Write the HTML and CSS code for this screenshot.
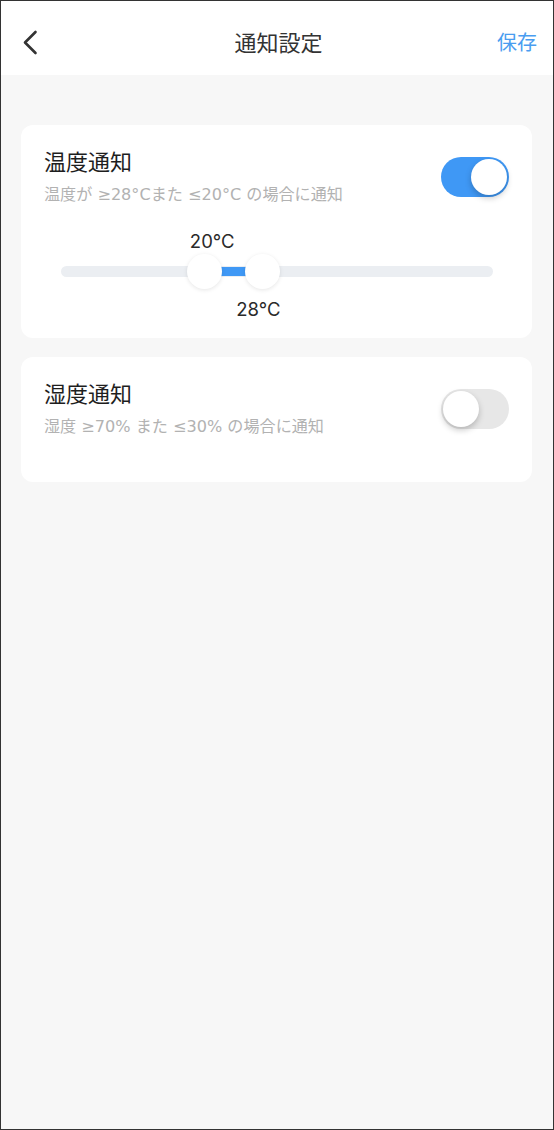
FILE: index.html
```html
<!DOCTYPE html>
<html lang="ja">
<head>
<meta charset="utf-8">
<title>通知設定</title>
<link rel="stylesheet" href="styles.css">
</head>
<body>
<div class="frame">
  <header class="topbar">
    <div class="back">
      <svg width="16" height="26" viewBox="0 0 16 26"><path d="M13.5 2 L3 12.5 L13.5 23" fill="none" stroke="#333" stroke-width="2.6" stroke-linecap="round" stroke-linejoin="round"/></svg>
    </div>
    <div class="title">通知設定</div>
    <div class="save">保存</div>
  </header>
  <main class="content">
    <section class="card card-temp">
      <div class="row">
        <div class="texts">
          <div class="name">温度通知</div>
          <div class="desc">温度が ≥28°Cまた ≤20°C の場合に通知</div>
        </div>
        <div class="switch on"><span class="thumb"></span></div>
      </div>
      <div class="slider">
        <div class="label-row"><span class="val" style="left:35%">20°C</span></div>
        <div class="track-area">
          <div class="track"></div>
          <div class="range" style="left:33.3%;width:13.4%"></div>
          <span class="knob" style="left:33.3%"></span>
          <span class="knob" style="left:46.7%"></span>
        </div>
        <div class="label-row low"><span class="val" style="left:45.7%">28°C</span></div>
      </div>
    </section>
    <section class="card card-hum">
      <div class="row">
        <div class="texts">
          <div class="name">湿度通知</div>
          <div class="desc">湿度 ≥70% また ≤30% の場合に通知</div>
        </div>
        <div class="switch"><span class="thumb"></span></div>
      </div>
    </section>
  </main>
</div>
</body>
</html>
```

FILE: styles.css
```css
* { box-sizing: border-box; }
html, body { margin: 0; padding: 0; }
body {
  font-family: "Inter", "Noto Sans CJK JP", sans-serif;
  color: #222;
}
.frame {
  width: 554px;
  height: 1130px;
  border: 1px solid #333;
  background: #f7f7f7;
  display: flex;
  flex-direction: column;
}
.topbar {
  height: 74px;
  background: #fff;
  display: grid;
  grid-template-columns: 1fr auto 1fr;
  align-items: center;
  padding: 10px 16px 0 19px;
}
.back { display: flex; align-items: center; height: 26px; padding-left: 2px; }
.title {
  font-size: 22px;
  color: #333;
  line-height: 30px;
}
.save {
  justify-self: end;
  font-size: 20px;
  color: #4a9df0;
  line-height: 28px;
}
.content {
  padding: 50px 21px 0 20px;
  display: flex;
  flex-direction: column;
  gap: 19px;
}
.card {
  background: #fff;
  border-radius: 12px;
  padding: 22px 23px 0 23px;
}
.card-temp { height: 213px; }
.card-hum { height: 125px; }
.row {
  display: flex;
  justify-content: space-between;
  align-items: flex-start;
}
.name {
  font-size: 22px;
  line-height: 30px;
  color: #1e1e1e;
}
.desc {
  font-family: "DejaVu Sans", "Noto Sans CJK JP", sans-serif;
  font-size: 16.1px;
  line-height: 22px;
  color: #b2b2b2;
  margin-top: 7px;
}
.switch {
  width: 68px;
  height: 40px;
  border-radius: 20px;
  background: #e7e7e7;
  margin-top: 10px;
  padding: 2px;
  display: flex;
  justify-content: flex-start;
}
.switch.on {
  background: #3f98f5;
  justify-content: flex-end;
}
.thumb {
  width: 36px;
  height: 36px;
  border-radius: 50%;
  background: #fff;
  box-shadow: 0 3px 6px rgba(0,0,0,0.22);
}
.slider {
  margin: 24px 16px 0 17px;
  display: flex;
  flex-direction: column;
}
.label-row {
  position: relative;
  height: 22px;
}
.label-row.low { margin-top: 9px; }
.val {
  position: absolute;
  top: 0;
  transform: translateX(-50%);
  font-size: 18.5px;
  line-height: 22px;
  color: #2a2a2a;
  white-space: nowrap;
}
.track-area {
  position: relative;
  height: 36px;
  margin-top: 1px;
}
.track {
  position: absolute;
  left: 0; right: 0;
  top: 13px;
  height: 11px;
  border-radius: 6px;
  background: #ebeef2;
}
.range {
  position: absolute;
  top: 14px;
  height: 9px;
  background: #3f98f5;
}
.knob {
  position: absolute;
  top: 0.5px;
  width: 35px;
  height: 35px;
  margin-left: -17.5px;
  border-radius: 50%;
  background: #fff;
  box-shadow: 0 1px 4px rgba(0,0,0,0.10);
}
```
